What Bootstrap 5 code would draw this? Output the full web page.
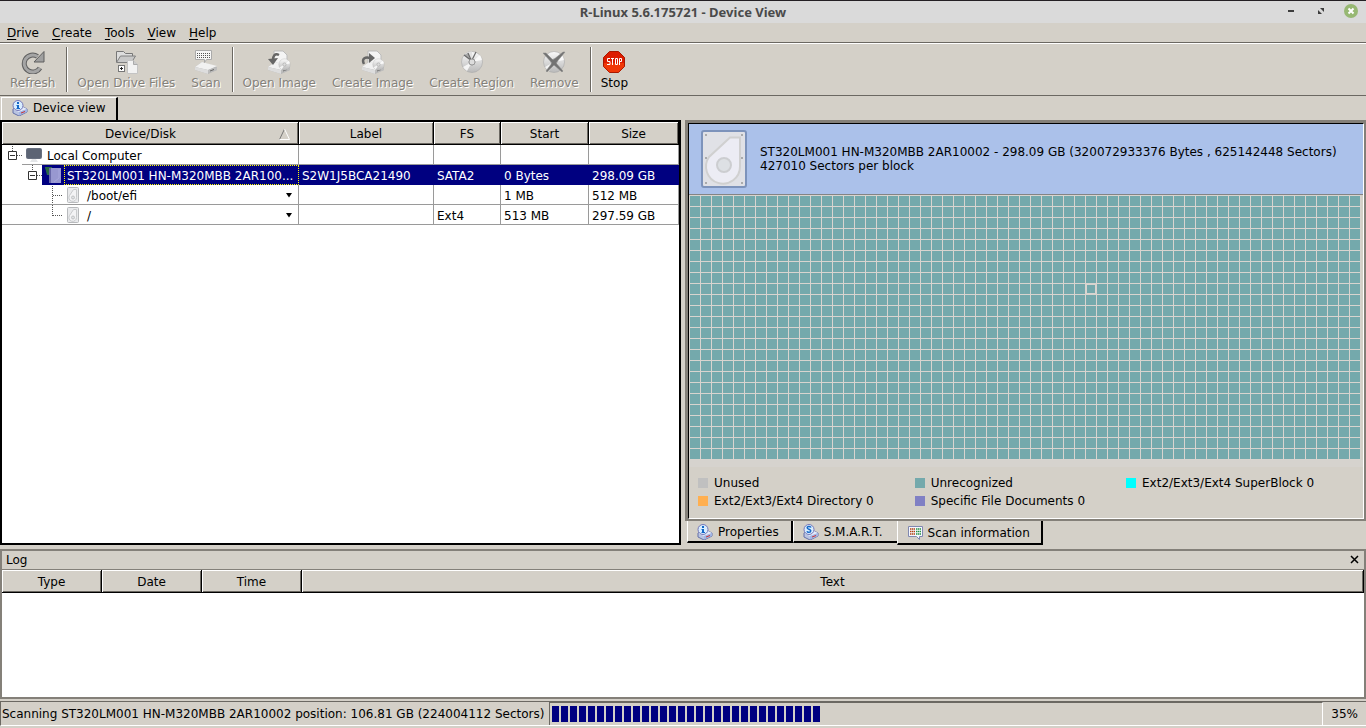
<!DOCTYPE html>
<html lang="en">
<head>
<meta charset="utf-8">
<meta name="viewport" content="width=device-width, initial-scale=1">
<title>R-Linux 5.6.175721 - Device View</title>
<link href="https://cdn.jsdelivr.net/npm/bootstrap@5.3.0/dist/css/bootstrap.min.css" rel="stylesheet">
<style>
:root { --face:#d4d0c8; --shade:#848079; --dark:#6b6862; --navy:#000080; --teal:#74a9ac; }
body { font:12px/14px "DejaVu Sans",sans-serif; color:#000; background:var(--face); }
button { font:inherit; color:inherit; background:none; border:0; padding:0; }
svg { display:block; flex:none; }
.app { min-height:100vh; }
.titlebar { height:23px; background:#dadada; border-top:1px solid #231f23; }
.titlebar h1 { font:700 13px/22px "Noto Sans",sans-serif; color:#4a4a4a; }
.winbtns { position:absolute; right:8px; top:3px; }
.menubar { height:20px; padding-left:1px; border-bottom:1px solid var(--dark); }
.menubar a { color:#000; text-decoration:none; padding:3px 7px 0 6px; line-height:14px; }
.menubar u { text-underline-offset:2px; }
.toolbar { height:53px; border-top:1px solid #fff; border-bottom:1px solid var(--dark); padding:3px 2px; }
.tool { display:flex; flex-direction:column; align-items:center; padding:3px 8px 0; }
.tool svg { margin:0 auto 2px; }
.tool:disabled { color:#84817a; text-shadow:1px 1px 0 #fff; }
.rule { width:2px; background:var(--dark); border-right:1px solid #fff; margin:0 1px 0 3px; }
.view-tabs { height:24px; padding:1px 1px 0; }
.view-tab { height:23px; padding:0 10px 2px; gap:5px; border:1px solid #fff; border-right:2px solid #000; border-bottom:0; }
.split { gap:4px; }
.pane { min-width:0; }
.tree-pane { border:2px solid #000; background:#fff; }
.gridtable { width:100%; table-layout:fixed; border-collapse:separate; border-spacing:0; }
.gridtable th { height:23px; padding:2px 0 0; font-weight:400; text-align:center; background:var(--face); border-right:1px solid #000; border-bottom:1px solid #000; box-shadow:inset 1px 1px #fff, inset -1px -1px var(--dark); }
.gridtable td { height:20px; padding:2px 3px 0; line-height:17px; border-right:1px solid #9a9a9a; border-bottom:1px solid #9a9a9a; white-space:nowrap; vertical-align:bottom; }
.gridtable td.node { padding:0; }
.gridtable td:not(.node) { padding-top:3px; line-height:16px; }
.node > div { height:19px; }
.node .label-text { padding-top:4px; }
.chosen td { background:var(--navy); color:#fff; border-color:var(--navy); }
.chosen td.node { border-bottom:0; }
.chosen td.node > div { height:20px; }
.twist { background:#fff; height:20px; }
.focusbox { height:20px; line-height:20px; padding-left:2px; border:1px dotted #ffff00; margin-right:-1px; }
.info { border:2px solid var(--shade); border-top-width:3px; border-left-width:3px; }
.info-in { border:1px solid #000; border-right-color:#fff; border-bottom-color:#fff; }
.banner { background:#abc1ea; border-bottom:1px solid #848484; height:71px; padding:0 12px; gap:13px; }
.blockmap { height:265px; margin-right:2px; padding:1px 0 0 1px; background:
  linear-gradient(#d8d4cf 1px,transparent 1px) 0 0/11px 11px,
  linear-gradient(90deg,#d8d4cf 1px,transparent 1px) 0 0/11px 11px,
  var(--teal);
  display:grid; grid-template-columns:repeat(auto-fill,11px); grid-auto-rows:11px; }
.blockmap i { grid-column:37; grid-row:9; width:10px; height:10px; border:1px solid #d8d4cf; }
.under { height:7px; background:#d6d3ce; }
.legend { display:grid; grid-template-columns:repeat(3,auto); justify-content:start; column-gap:41px; row-gap:4px; padding:9px 9px 10px; }
.legend div { display:flex; align-items:center; gap:6px; }
.legend span { width:10px; height:10px; background:var(--c); }
.foot-tabs { height:24px; padding-left:2px; }
.foot-tab { height:22px; gap:5px; padding:2px 12px 0 9px; border-left:1px solid #fff; border-right:2px solid #000; border-bottom:2px solid #000; }
.foot-tab.behind { border-right:0; padding-right:14px; }
.foot-tab.active { height:24px; padding-right:11px; gap:4px; }
.log { border:2px solid var(--shade); margin-top:4px; }
.logbody { background:#fff; min-height:60px; }
.loghead { height:19px; padding:0 4px; border-bottom:1px solid var(--shade); }
.statusbar { height:25px; margin:2px 0; border-top:1px solid var(--dark); border-bottom:1px solid #fff; border-left:1px solid var(--dark); }
.status-text { padding:0 5px 0 1px; }
.meter { height:23px; padding:3px 0 3px 2px; border-left:1px solid var(--dark); border-top:1px solid var(--dark); border-right:1px solid #fff; border-radius:0; background:var(--face); }
.meter .progress-bar { background:repeating-linear-gradient(90deg,var(--navy) 0 7px,transparent 7px 9px); }
</style>
</head>
<body>
<svg width="0" height="0" class="position-absolute" aria-hidden="true">
  <defs>
    <linearGradient id="gl" x2="0" y2="1"><stop stop-color="#fafafa"/><stop offset="1" stop-color="#b9b9b9"/></linearGradient>
    <symbol id="box" viewBox="0 0 16 16"><path d="M1 9v4l6 3 8-4V9L9 6z" fill="#b9c4e2" stroke="#6470a8"/><path d="M1.500 9.500L7 12l8-3-6-3z" fill="#e4ebfa"/><path d="M7 12v3.500L15 12V9z" fill="#a2b5e4"/><path d="M9 13l4-1.500" stroke="#c33"/></symbol>
    <symbol id="lens" viewBox="0 0 16 16"><circle cx="6" cy="5.500" r="5" fill="#d8edff" stroke="#7577b8"/></symbol>
    <symbol id="infodisk" viewBox="0 0 16 16"><use href="#box"/><use href="#lens"/><path d="M5 2h2v2H5zM4.500 5H7v3h1v1H4.500V8H5V6h-.5z" fill="#1468c8"/></symbol>
    <symbol id="smartdisk" viewBox="0 0 16 16"><use href="#box"/><use href="#lens"/><path d="M8 3.500C7.500 2 4 2 4.200 4c.2 1.500 3.500 1 3.600 2.700C7.700 8.800 4.500 8.700 4 7.300" fill="none" stroke="#1468c8" stroke-width="1.500"/></symbol>
    <symbol id="minidisk" viewBox="0 0 12 16"><rect x=".5" y=".5" width="11" height="15" rx="1" fill="#e9eaec" stroke="#b8babd"/><path d="M9.500 2.500v8a3.800 3.800 0 1 1-7-2l4-6z" fill="#f3f3f5" stroke="#c8cacc"/><circle cx="6" cy="10.500" r="1.500" fill="#e0e2e4" stroke="#c0c2c4"/></symbol>
    <symbol id="drive" viewBox="0 0 24 24"><path d="M1 17l7-5 15 5v3l-9 4-13-4z" fill="#b5b5b5"/><path d="M1 17l7-5 15 4-9 4z" fill="#f1f1f1"/><path d="M1 17v3l13 4v-4z" fill="#ddd"/><path d="M14 20v3l9-3v-3z" fill="#bdbdbd"/><path d="M16 21l4-1.500" stroke="#666"/></symbol>
    <symbol id="disc" viewBox="0 0 24 24"><circle cx="12" cy="12" r="10.500" fill="url(#gl)" stroke="#aaa" stroke-width=".6"/><path d="M12 12l8-7a10 10 0 0 1 2 5zM12 12L3 17a10 10 0 0 0 4 4z" fill="#fff" opacity=".8"/><circle cx="12" cy="12" r="3" fill="#ddd" stroke="#a0a0a0"/></symbol>
  </defs>
</svg>
<div class="app d-flex flex-column">
  <header class="titlebar position-relative text-center">
    <h1 class="m-0">R-Linux 5.6.175721 - Device View</h1>
    <div class="winbtns d-flex gap-3">
      <button type="button" aria-label="Minimize"><svg width="14" height="14"><path d="M4 6h6v2H4z" fill="#3c3c3c"/></svg></button>
      <button type="button" aria-label="Maximize"><svg width="14" height="14"><path d="M6 4h4v4zM4 6v4h4z" fill="#3c3c3c"/></svg></button>
      <button type="button" aria-label="Close"><svg width="14" height="14"><circle cx="7" cy="7" r="7" fill="#97b873"/><path d="M4.500 4.500l5 5m0-5l-5 5" stroke="#fff" stroke-width="2"/></svg></button>
    </div>
  </header>
  <nav class="menubar d-flex" aria-label="Main menu">
    <a href="#drive"><u>D</u>rive</a><a href="#create"><u>C</u>reate</a><a href="#tools"><u>T</u>ools</a><a href="#view"><u>V</u>iew</a><a href="#help"><u>H</u>elp</a>
  </nav>
  <div class="toolbar d-flex" role="toolbar">
    <button class="tool" disabled><svg width="24" height="24"><path d="M16.500 6.500A8.500 8.500 0 1 0 19 18" fill="none" stroke="#5f5f5f" stroke-width="5"/><path d="M16.500 6.500A8.500 8.500 0 1 0 19 18" fill="none" stroke="#a5a5a5" stroke-width="3"/><path d="M23 1.500V12H13z" fill="#a0a0a0" stroke="#5f5f5f"/></svg>Refresh</button>
    <div class="rule"></div>
    <button class="tool" disabled><svg width="24" height="24"><path d="M2.500 12V1.500h7l2 2h7V6" fill="#ddd" stroke="#777"/><path d="M2.500 12.500l4-6.500h15l-4 6.500z" fill="#c8c8c8" stroke="#808080"/><rect x="4.500" y="15.500" width="6" height="6" fill="#fff" stroke="#777"/><path d="M6 18.500h3M7.500 17v3" stroke="#222"/><path d="M13.500 10.500h6l4 4v9h-10z" fill="#f2f2f2" stroke="#c4c4c4"/><path d="M19.500 10.500v4h4" fill="#ccc" stroke="#aaa"/></svg>Open Drive Files</button>
    <button class="tool" disabled><svg width="24" height="24"><use href="#drive"/><path d="M1.500 .5h16v9h-5l-2 3v-3h-9z" fill="#f7f7f7" stroke="#aaa"/><path d="M3 3.500h13M3 5.500h13M3 7.500h13" stroke="#555" stroke-dasharray="1 1"/></svg>Scan</button>
    <div class="rule"></div>
    <button class="tool" disabled><svg width="24" height="24"><path d="M7 1h9l4 4v9H7z" fill="#f4f4f4" stroke="#bbb"/><use href="#drive"/><use href="#disc" x="11" y="8" width="13" height="13"/><path d="M12 5C8 3 5.500 6 6 11" fill="none" stroke="#666" stroke-width="2.500"/><path d="M1 9l10-1-5 7z" fill="#666"/></svg>Open Image</button>
    <button class="tool" disabled><svg width="24" height="24"><path d="M7 1h9l4 4v9H7z" fill="#f4f4f4" stroke="#bbb"/><use href="#drive"/><use href="#disc" x="11" y="8" width="13" height="13"/><path d="M3 14C0 8 5 6.500 9 8" fill="none" stroke="#666" stroke-width="2.500"/><path d="M8 3l6 5-6 5z" fill="#666"/></svg>Create Image</button>
    <button class="tool" disabled><svg width="24" height="24"><use href="#disc"/><path d="M12 12L4 5a10 10 0 0 1 8-3.500z" fill="#e2e2e2"/><path d="M11 11L4 5l4-2z" fill="#aaa"/><path d="M12 11L4 5M11.500 11L8 3M12 10l4-8" stroke="#6a6a6a" stroke-width="1.200"/><circle cx="12" cy="12" r="3" fill="#ddd" stroke="#999"/></svg>Create Region</button>
    <button class="tool" disabled><svg width="24" height="24"><use href="#disc"/><path d="M1 3h3l7 7 10-8h2L14 13l7 8-1 1-8-7-7 7-1-1 6-8z" fill="#737373" stroke="#8a8a8a" stroke-width=".5"/></svg>Remove</button>
    <div class="rule"></div>
    <button class="tool" type="button"><svg width="24" height="24"><path d="M7.500 1.500h9l6 6v9l-6 6h-9l-6-6v-9z" fill="#dc1c00" stroke="#a81800"/><path d="M2 13h20v3.500L16.500 22h-9L2 16.500z" fill="#f03808"/><g fill="none" stroke="#fff"><path d="M8 8.500H5.500v3H8v3H5M9 8.500h3M10.500 8.500V15M13.500 8.500h2v6h-2zM17.500 15V8.500h2v3h-2"/></g></svg>Stop</button>
  </div>
  <div class="view-tabs d-flex">
    <button type="button" class="view-tab d-flex align-items-center"><svg width="16" height="16"><use href="#infodisk"/></svg>Device view</button>
  </div>
  <main class="split d-flex">
    <section class="pane col"><div class="tree-pane h-100">
      <table class="gridtable">
        <colgroup><col><col style="width:135px"><col style="width:67px"><col style="width:88px"><col style="width:90px"></colgroup>
        <thead><tr><th><div class="d-flex align-items-center"><span class="flex-fill">Device/Disk</span><svg class="me-2" width="11" height="12"><path d="M.5 11.500L5.500 1" stroke="#777"/><path d="M5.500 1l5 10.500H.5" fill="none" stroke="#fff"/></svg></div></th><th>Label</th><th>FS</th><th>Start</th><th>Size</th></tr></thead>
        <tbody>
          <tr><td class="node"><div class="d-flex align-items-center"><button type="button" class="twist" aria-label="Collapse Local Computer"><svg width="20" height="20"><path d="M10.500 1v5M15 10.500h5" stroke="#555" stroke-dasharray="1 1"/><path d="M6.500 6.500h8v8h-8zM8 10.500h5" fill="#fff" stroke="#333"/></svg></button><svg class="ms-1 me-1" width="17" height="16"><rect x="0" y="1" width="16" height="11" rx="2" fill="#687080"/><rect x="1" y="2" width="14" height="9" rx="1" fill="#5c6474"/><path d="M6 12h4l2 3H4z" fill="#e4e6e8"/></svg><span class="label-text">Local Computer</span></div></td><td></td><td></td><td></td><td></td></tr>
          <tr class="chosen"><td class="node"><div class="d-flex"><button type="button" class="twist" aria-label="Collapse ST320LM001"><svg width="40" height="20"><path d="M30.500 0v6M35 10.500h5" stroke="#555" stroke-dasharray="1 1"/><path d="M26.500 6.500h8v8h-8zM28 10.500h5" fill="#fff" stroke="#333"/></svg></button><svg width="22" height="20"><path d="M3 2h7v8H5z" fill="#28684c"/><path d="M3 2h7l-5 6z" fill="#286840"/><path d="M7 3h12v15H7z" fill="#9898d0"/><path d="M7 3h2v15H7z" fill="#6868a8"/><path d="M17 4v9l-5 4" fill="none" stroke="#a8a8dc"/></svg><div class="focusbox flex-fill">ST320LM001 HN-M320MBB 2AR100...</div></div></td><td>S2W1J5BCA21490</td><td>SATA2</td><td>0 Bytes</td><td>298.09 GB</td></tr>
          <tr><td class="node"><div class="d-flex align-items-center"><svg width="65" height="19"><path d="M50.500 1v18M51 10.500h9" stroke="#555" stroke-dasharray="1 1"/></svg><svg class="me-2" width="12" height="16"><use href="#minidisk"/></svg><span class="label-text">/boot/efi</span><svg class="ms-auto me-1" width="9" height="7"><path d="M1 2h6L4 6.500z"/></svg></div></td><td></td><td></td><td>1 MB</td><td>512 MB</td></tr>
          <tr><td class="node"><div class="d-flex align-items-center"><svg width="65" height="19"><path d="M50.500 0v11M51 10.500h9" stroke="#555" stroke-dasharray="1 1"/></svg><svg class="me-2" width="12" height="16"><use href="#minidisk"/></svg><span class="label-text">/</span><svg class="ms-auto me-1" width="9" height="7"><path d="M1 2h6L4 6.500z"/></svg></div></td><td></td><td>Ext4</td><td>513 MB</td><td>297.59 GB</td></tr>
        </tbody>
      </table>
    </div></section>
    <section class="pane col">
      <div class="info"><div class="info-in">
        <div class="banner d-flex align-items-center">
          <svg width="46" height="58"><rect x="1" y="1" width="44" height="56" rx="2" fill="#e0e1e6" stroke="#7d93bb" stroke-width="2"/><path d="M39 7.500v29a17 17 0 1 1-31-9.500L29 7.500z" fill="#ececf4" stroke="#d0d0d0" stroke-width="2"/><circle cx="23" cy="35" r="7" fill="#dde0e4" stroke="#cccdd0" stroke-width="2"/><g fill="#999"><circle cx="5" cy="5" r="1"/><circle cx="41" cy="5" r="1"/><circle cx="5" cy="28" r="1"/><circle cx="41" cy="28" r="1"/><circle cx="5" cy="53" r="1"/><circle cx="41" cy="53" r="1"/></g></svg>
          <div class="text-nowrap">ST320LM001 HN-M320MBB 2AR10002 - 298.09 GB (320072933376 Bytes , 625142448 Sectors)<br>427010 Sectors per block</div>
        </div>
        <div class="blockmap"><i></i></div>
        <div class="under"></div>
        <div class="legend">
          <div><span style="--c:#c0c0c0"></span>Unused</div><div><span style="--c:#74a9ac"></span>Unrecognized</div><div><span style="--c:#00ffff"></span>Ext2/Ext3/Ext4 SuperBlock 0</div>
          <div><span style="--c:#ffaf50"></span>Ext2/Ext3/Ext4 Directory 0</div><div><span style="--c:#8080c4"></span>Specific File Documents 0</div>
        </div>
      </div></div>
      <div class="foot-tabs d-flex">
        <button type="button" class="foot-tab d-flex align-items-center"><svg width="16" height="16"><use href="#infodisk"/></svg>Properties</button>
        <button type="button" class="foot-tab behind d-flex align-items-center"><svg width="16" height="16"><use href="#smartdisk"/></svg>S.M.A.R.T.</button>
        <button type="button" class="foot-tab active d-flex align-items-center"><svg width="17" height="16"><path d="M1.500 1.500h14v10h-3v3l-3-3h-8z" fill="#f6f8ff" stroke="#8088b0"/><g stroke-width="1.400"><path d="M3 4h5M3 6.500h5M3 9h5" stroke="#b04010" stroke-dasharray="1.500 .5"/><path d="M9 4h5M9 6.500h5M9 9h5" stroke="#209040" stroke-dasharray="1.500 .5"/></g></svg>Scan information</button>
      </div>
    </section>
  </main>
  <section class="log d-flex flex-column flex-fill">
    <div class="loghead d-flex justify-content-between align-items-center">Log<button type="button" aria-label="Close log"><svg width="10" height="10"><path d="M1 1l7 7M8 1L1 8" stroke="#000" stroke-width="1.500"/></svg></button></div>
    <div class="logbody flex-fill">
      <table class="gridtable"><colgroup><col style="width:100px"><col style="width:100px"><col style="width:100px"><col></colgroup><thead><tr><th>Type</th><th>Date</th><th>Time</th><th>Text</th></tr></thead></table>
    </div>
  </section>
  <footer class="statusbar d-flex align-items-center">
    <div class="status-text text-nowrap">Scanning ST320LM001 HN-M320MBB 2AR10002 position: 106.81 GB (224004112 Sectors)</div>
    <div class="progress meter flex-fill" role="progressbar" aria-label="Scan progress" aria-valuenow="35" aria-valuemin="0" aria-valuemax="100"><div class="progress-bar" style="width:35%"></div></div>
    <div class="ps-2 pe-2">35%</div>
  </footer>
</div>
<script src="https://cdn.jsdelivr.net/npm/bootstrap@5.3.0/dist/js/bootstrap.bundle.min.js"></script>
</body>
</html>
